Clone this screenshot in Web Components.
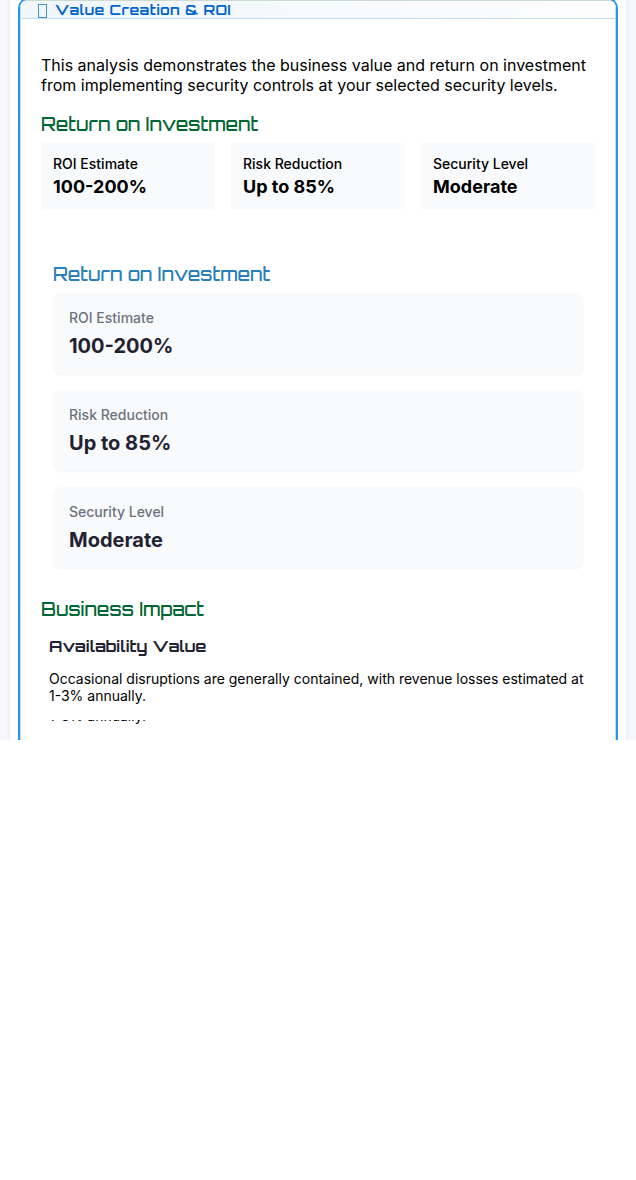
<!DOCTYPE html>
<html lang="en">
<head>
<meta charset="utf-8">
<title>Value Creation &amp; ROI</title>
<style>
html,body{margin:0;padding:0;background:#fff;height:1180px;overflow:hidden;font-family:Inter,"Liberation Sans",sans-serif;color:#000}
</style>
</head>
<body>
<value-page></value-page>
<script>
const define = (name, html) => {
  const t = document.createElement('template');
  t.innerHTML = html;
  customElements.define(name, class extends HTMLElement {
    constructor() {
      super();
      this.attachShadow({mode: 'open'}).appendChild(t.content.cloneNode(true));
    }
  });
};

define('section-title', `<style>
:host{display:block;font:500 18px/24px Orbitron,Inter,sans-serif;color:#006633;white-space:nowrap}
</style><slot></slot>`);

define('metric-tile', `<style>
:host{display:block;box-sizing:border-box;height:66px;padding:12px;background:#f9fafc;border-radius:2px}
.label{font:500 14px/17px Inter,sans-serif}
.value{font:700 18px/22px Inter,sans-serif;margin-top:4px}
</style><div class="label"><slot name="label"></slot></div><div class="value"><slot></slot></div>`);

define('metric-card', `<style>
:host{display:block;box-sizing:border-box;height:81px;padding:16px;background:#f9fafc;border-radius:8px;box-shadow:0 1px 2px rgba(0,0,0,.05)}
.label{font:500 14px/17px Inter,sans-serif;color:#6b7280}
.value{font:700 20px/24px Inter,sans-serif;color:#222233;margin-top:8px}
</style><div class="label"><slot name="label"></slot></div><div class="value"><slot></slot></div>`);

define('widget-header', `<style>
:host{display:flex;box-sizing:border-box;height:18px;padding:0 0 0 17px;align-items:center;border-bottom:1px solid #bfdcf5;background:linear-gradient(90deg,#f0f6fc,#fdfdfe);color:#0066cc}
svg{display:block;margin:3px 8px 0 0;flex:none}
span{display:block;font:700 14px/18px Orbitron,Inter,sans-serif;letter-spacing:.5px;white-space:nowrap;margin-top:1px}
</style><svg width="9" height="14" viewBox="0 0 9 14"><rect x=".5" y=".5" width="8" height="13" fill="none" stroke="#0066cc" stroke-opacity=".7"/></svg><span><slot></slot></span>`);

define('widget-card', `<style>
:host{display:block;box-sizing:border-box;height:752px;margin:-2px 8px 0;border:2px solid #2196f3;border-radius:10px;overflow:hidden;background:#fff}
.inner{box-sizing:border-box;height:100%;border:1px solid #cbddd2;border-width:1px 1px 0;border-radius:8px 8px 0 0}
.body{padding:36px 20px 0}
</style><div class="inner"><slot name="header"></slot><div class="body"><slot></slot></div></div>`);

define('value-page', `<style>
:host{display:block;box-sizing:border-box;height:740px;overflow:hidden;padding:0 10px;background:#f7f8fd}
.panel{height:740px;background:#fff;box-shadow:0 0 5px rgba(0,0,0,.08);display:flow-root}
p{margin:0}
.intro{font-size:16px;line-height:20px;white-space:nowrap}
.s1{margin-top:17px}
.tiles{display:grid;grid-template-columns:repeat(3,1fr);gap:16px;margin-top:7px}
.nested{padding:0 12px;margin-top:53px}
.nested section-title{color:#2980b9}
.cards{display:grid;gap:16px;margin-top:7px}
.s2{margin-top:29px}
.impact{padding:0 8px;margin-top:15px}
h4{margin:0;font:700 16px/20px Orbitron,Inter,sans-serif;color:#222233}
.impact p{font-size:14px;line-height:17px;margin-top:14px}
.impact .tail{height:20px;overflow:hidden;margin-top:16px}
.tail span{display:block;margin-top:-13px}
</style>
<div class="panel"><widget-card>
<widget-header slot="header">Value Creation &amp; ROI</widget-header>
<p class="intro">This analysis demonstrates the business value and return on investment<br>from implementing security controls at your selected security levels.</p>
<section-title class="s1">Return on Investment</section-title>
<div class="tiles">
<metric-tile><span slot="label">ROI Estimate</span>100-200%</metric-tile>
<metric-tile><span slot="label">Risk Reduction</span>Up to 85%</metric-tile>
<metric-tile><span slot="label">Security Level</span>Moderate</metric-tile>
</div>
<div class="nested">
<section-title>Return on Investment</section-title>
<div class="cards">
<metric-card><span slot="label">ROI Estimate</span>100-200%</metric-card>
<metric-card><span slot="label">Risk Reduction</span>Up to 85%</metric-card>
<metric-card><span slot="label">Security Level</span>Moderate</metric-card>
</div></div>
<section-title class="s2">Business Impact</section-title>
<div class="impact">
<h4>Availability Value</h4>
<p>Occasional disruptions are generally contained, with revenue losses estimated at<br>1-3% annually.</p>
<p class="tail"><span>1-3% annually.</span></p>
</div>
</widget-card></div>`);
</script>
</body>
</html>
